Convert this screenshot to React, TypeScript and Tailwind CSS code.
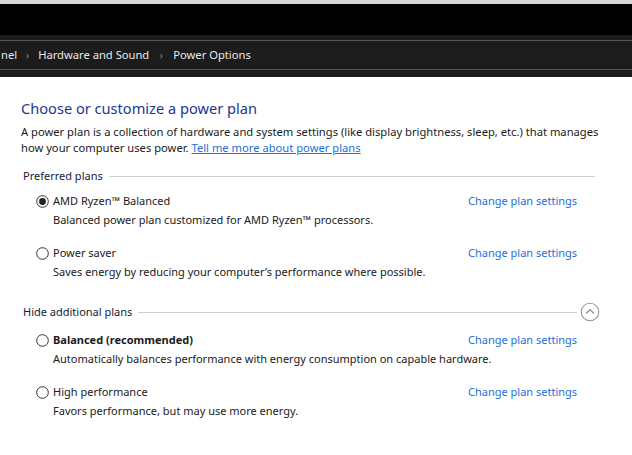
import React from "react";

const font = { fontFamily: '"Segoe UI", "Noto Sans", "Open Sans", sans-serif' };

function Radio({ checked }: { checked?: boolean }) {
  return (
    <svg width="13" height="13" viewBox="0 0 13 13" className="shrink-0">
      <circle cx="6.5" cy="6.5" r="5.8" fill="white" stroke="#333" strokeWidth="1" />
      {checked && <circle cx="6.5" cy="6.5" r="3.4" fill="#222" />}
    </svg>
  );
}

function Plan({ name, desc, checked, bold }: { name: string; desc: string; checked?: boolean; bold?: boolean }) {
  return (
    <div className="flex flex-col">
      <div className="flex items-center h-[18px]">
        <div className="pl-[36px] flex items-center gap-[4px] flex-1">
          <Radio checked={checked} />
          <span className={`text-[11px] text-[#1a1a1a] ${bold ? "font-bold" : ""}`}>{name}</span>
        </div>
        <span className="text-[11px] text-[#1c6fd9] w-[164px]">Change plan settings</span>
      </div>
      <div className="pl-[53px] pt-[2px] h-[19px] flex items-center text-[11px] text-[#1a1a1a]">{desc}</div>
    </div>
  );
}

function Header({ label, chevron }: { label: string; chevron?: boolean }) {
  return (
    <div className={`flex items-center h-[18px] pl-[23px] ${chevron ? "pr-[32px]" : "pr-[37px]"}`}>
      <span className="text-[11px] text-[#141a3a]">{label}</span>
      <div className="flex-1 h-px bg-[#cfcfcf] ml-[6px]" />
      {chevron && (
        <svg width="20" height="20" viewBox="0 0 20 20" className="ml-[3px] shrink-0">
          <circle cx="10" cy="10" r="8.8" fill="white" stroke="#9a9a9a" strokeWidth="1.1" />
          <path d="M6 11.5 L10 7.5 L14 11.5" fill="none" stroke="#8a8a8a" strokeWidth="1.2" />
        </svg>
      )}
    </div>
  );
}

export default function App() {
  return (
    <div className="w-[632px] h-[455px] overflow-hidden bg-white flex flex-col" style={font}>
      <div className="h-[4px] bg-[#d8d8d8]" />
      <div className="h-[31px] bg-black" />
      <div className="h-[5px] bg-[#1c1c1c]" />
      <div className="h-px bg-[#555555]" />
      <div className="h-[28px] bg-[#1c1c1c] flex items-center text-[11.2px] text-[#e8e8e8]">
        <span className="ml-[1px]">nel</span>
        <span className="w-[21px] text-center text-[#8a8a8a] text-[10px]">›</span>
        <span>Hardware and Sound</span>
        <span className="w-[24px] text-center text-[#8a8a8a] text-[10px]">›</span>
        <span>Power Options</span>
      </div>
      <div className="h-px bg-[#555555]" />
      <div className="h-[7px] bg-[#1c1c1c]" />
      <div className="flex flex-col pt-[20px]">
        <div className="pl-[21px] text-[14.6px] text-[#1c3790] leading-[22px]">Choose or customize a power plan</div>
        <div className="pl-[21px] pr-[10px] mt-[5px] text-[11.2px] leading-[16px] text-[#1a1a1a] whitespace-nowrap">
          A power plan is a collection of hardware and system settings (like display brightness, sleep, etc.) that manages
          <br />
          how your computer uses power.{" "}
          <span className="text-[#1c6fd9] underline">Tell me more about power plans</span>
        </div>
        <div className="mt-[11px]">
          <Header label="Preferred plans" />
        </div>
        <div className="mt-[7px] flex flex-col gap-[15px]">
          <Plan name="AMD Ryzen™ Balanced" desc="Balanced power plan customized for AMD Ryzen™ processors." checked />
          <Plan name="Power saver" desc="Saves energy by reducing your computer’s performance where possible." />
        </div>
        <div className="mt-[22px]">
          <Header label="Hide additional plans" chevron />
        </div>
        <div className="mt-[10px] flex flex-col gap-[15px]">
          <Plan name="Balanced (recommended)" desc="Automatically balances performance with energy consumption on capable hardware." bold />
          <Plan name="High performance" desc="Favors performance, but may use more energy." />
        </div>
      </div>
    </div>
  );
}
